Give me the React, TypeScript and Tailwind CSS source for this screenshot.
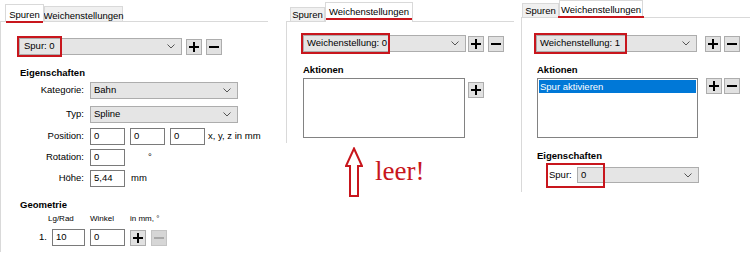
import React from "react";

const RED = "border-[#c8161d]";

const Chevron = () => (
  <svg width="8" height="5" viewBox="0 0 8 5" className="shrink-0">
    <polyline points="0.5,0.5 4,4 7.5,0.5" fill="none" stroke="#555" strokeWidth="1" />
  </svg>
);

const Btn = ({ kind, disabled }: { kind: "plus" | "minus"; disabled?: boolean }) => (
  <div
    className={
      "w-[16px] h-[16px] shrink-0 border flex items-center justify-center " +
      (disabled ? "bg-[#d6d6d6] border-[#c4c4c4]" : "bg-[#e1e1e1] border-[#adadad]")
    }
  >
    <svg width="10" height="10" viewBox="0 0 10 10">
      <rect x="0" y="4" width="10" height="2" fill={disabled ? "#a8a8a8" : "#000"} />
      {kind === "plus" && <rect x="4" y="0" width="2" height="10" fill="#000" />}
    </svg>
  </div>
);

const Combo = ({
  text,
  className,
  pad = "pl-[3px]",
}: {
  text: string;
  className: string;
  pad?: string;
}) => (
  <div
    className={
      "shrink-0 bg-[#e5e5e5] border border-[#adadad] flex items-center justify-between pr-[6px] " +
      pad +
      " " +
      className
    }
  >
    <span>{text}</span>
    <Chevron />
  </div>
);

const Input = ({ value, className }: { value: string; className: string }) => (
  <div className={"shrink-0 h-[17px] bg-white border border-[#7a7a7a] flex items-center pl-[3px] " + className}>
    {value}
  </div>
);

const Tab = ({
  label,
  selected,
  className,
  underline,
}: {
  label: string;
  selected?: boolean;
  className: string;
  underline?: boolean;
}) => (
  <div
    className={
      "border border-b-0 border-[#d9d9d9] flex justify-center " +
      (selected ? "bg-white relative z-10 -mb-px" : "bg-[#f0f0f0]") +
      " " +
      className
    }
  >
    <span className="relative leading-[12px]">
      {label}
      {underline && <span className="absolute left-[-3px] right-[-3px] top-[12px] h-[2px] bg-[#c8161d]" />}
    </span>
  </div>
);

const Label = ({ children }: { children: React.ReactNode }) => (
  <div className="w-[66px] shrink-0 text-right pr-[1px]">{children}</div>
);

export default function App() {
  return (
    <div className="w-[750px] h-[255px] bg-white flex overflow-hidden text-[9.5px] text-black font-['Liberation_Sans',Arial,sans-serif]">
      {/* Panel 1 - Spuren */}
      <div className="w-[268px] shrink-0 flex flex-col">
        <div className="h-[21px] flex items-end pl-[5px]">
          <Tab label="Spuren" selected underline className="w-[39px] h-[18px] pt-[4px]" />
          <Tab label="Weichenstellungen" className="w-[79px] h-[15px] pt-[3px]" />
        </div>
        <div className="h-[231px] border-t border-l border-[#d9d9d9] pl-[18px] pt-[16px]">
          <div className="flex items-center">
            <div className="relative">
              <Combo text="Spur: 0" className="w-[163px] h-[17px]" pad="pl-[4px]" />
              <div className={"absolute left-[-2px] top-[-2px] w-[45px] h-[21px] border-2 " + RED} />
            </div>
            <div className="ml-[4px]">
              <Btn kind="plus" />
            </div>
            <div className="ml-[4px]">
              <Btn kind="minus" />
            </div>
          </div>

          <div className="mt-[12px] ml-px font-bold leading-[12px]">Eigenschaften</div>

          <div className="mt-[3px] flex items-center">
            <Label>Kategorie:</Label>
            <Combo text="Bahn" className="ml-[5px] w-[148px] h-[17px]" />
          </div>
          <div className="mt-[7px] flex items-center">
            <Label>Typ:</Label>
            <Combo text="Spline" className="ml-[5px] w-[148px] h-[17px]" />
          </div>
          <div className="mt-[5px] flex items-center">
            <Label>Position:</Label>
            <Input value="0" className="ml-[5px] w-[35px]" />
            <Input value="0" className="ml-[5px] w-[35px]" />
            <Input value="0" className="ml-[5px] w-[35px]" />
            <span className="ml-[3px] whitespace-nowrap">x, y, z in mm</span>
          </div>
          <div className="mt-[4px] flex items-center">
            <Label>Rotation:</Label>
            <Input value="0" className="ml-[5px] w-[35px]" />
            <span className="ml-[23px]">°</span>
          </div>
          <div className="mt-[4px] flex items-center">
            <Label>Höhe:</Label>
            <Input value="5,44" className="ml-[5px] w-[35px]" />
            <span className="ml-[6px]">mm</span>
          </div>

          <div className="mt-[12px] ml-px font-bold leading-[12px]">Geometrie</div>
          <div className="mt-[3px] flex text-[8px] leading-[10px] pl-[29px]">
            <span className="w-[42px]">Lg/Rad</span>
            <span className="w-[40px]">Winkel</span>
            <span>in mm, °</span>
          </div>
          <div className="mt-[5px] flex items-center">
            <div className="w-[33px] shrink-0 text-right pr-[5px]">1.</div>
            <Input value="10" className="w-[33px] h-[16px]" />
            <Input value="0" className="ml-[5px] w-[35px] h-[16px]" />
            <div className="ml-[5px]">
              <Btn kind="plus" />
            </div>
            <div className="ml-[5px]">
              <Btn kind="minus" disabled />
            </div>
          </div>
        </div>
      </div>

      {/* Panel 2 - Weichenstellung 0 */}
      <div className="ml-[18px] w-[228px] shrink-0 flex flex-col">
        <div className="h-[21px] flex items-end pl-[4px]">
          <Tab label="Spuren" className="w-[35px] h-[14px] pt-px" />
          <Tab label="Weichenstellungen" selected underline className="w-[88px] h-[20px] pt-[3px]" />
        </div>
        <div className="h-[122px] border-t border-l border-[#d9d9d9] pl-[16px] pt-[13px]">
          <div className="flex items-center">
            <div className="relative">
              <Combo text="Weichenstellung: 0" className="w-[163px] h-[17px]" />
              <div className={"absolute left-[-2px] top-[-2px] w-[89px] h-[21px] border-2 " + RED} />
            </div>
            <div className="ml-[2px]">
              <Btn kind="plus" />
            </div>
            <div className="ml-[4px]">
              <Btn kind="minus" />
            </div>
          </div>
          <div className="mt-[12px] font-bold leading-[12px]">Aktionen</div>
          <div className="mt-[2px] flex items-start">
            <div className="w-[162px] h-[60px] border border-[#828282] bg-white shrink-0" />
            <div className="ml-[3px] mt-[4px]">
              <Btn kind="plus" />
            </div>
          </div>
        </div>
        <div className="mt-[4px] pl-[59px] flex items-start">
          <svg width="18" height="50" viewBox="0 0 18 50" className="shrink-0">
            <polygon
              points="9,1.5 17,19 13,19 13,49 5,49 5,19 1,19"
              fill="white"
              stroke="#c8161d"
              strokeWidth="2"
              strokeLinejoin="miter"
            />
          </svg>
          <span className="ml-[12px] mt-[11px] text-[27px] leading-none text-[#c8161d] font-['Liberation_Serif','Times_New_Roman',serif]">
            leer!
          </span>
        </div>
      </div>

      {/* Panel 3 - Weichenstellung 1 */}
      <div className="ml-[7px] w-[229px] shrink-0 flex flex-col">
        <div className="h-[17px] flex items-end pl-px">
          <Tab label="Spuren" className="w-[37px] h-[14px] pt-px" />
          <Tab label="Weichenstellungen" selected underline className="w-[84px] h-[18px] pt-[3px]" />
        </div>
        <div className="h-[175px] border-t border-l border-[#d9d9d9] pl-[14px] pt-[17px]">
          <div className="flex items-center">
            <div className="relative">
              <Combo text="Weichenstellung: 1" className="w-[161px] h-[17px]" />
              <div className={"absolute left-[-2px] top-[-2px] w-[93px] h-[21px] border-2 " + RED} />
            </div>
            <div className="ml-[8px]">
              <Btn kind="plus" />
            </div>
            <div className="ml-[3px]">
              <Btn kind="minus" />
            </div>
          </div>
          <div className="mt-[12px] ml-px font-bold leading-[12px]">Aktionen</div>
          <div className="mt-[2px] flex items-start">
            <div className="ml-px w-[161px] h-[60px] border border-[#828282] bg-white shrink-0 p-px">
              <div className="h-[13px] bg-[#0078d7] text-white leading-[13px] pl-px">Spur aktivieren</div>
            </div>
            <div className="ml-[8px]">
              <Btn kind="plus" />
            </div>
            <div className="ml-[2px]">
              <Btn kind="minus" />
            </div>
          </div>
          <div className="mt-[12px] ml-px font-bold leading-[12px]">Eigenschaften</div>
          <div className="mt-[5px] relative flex items-center">
            <span className="ml-[13px] w-[28px] shrink-0">Spur:</span>
            <Combo text="0" className="w-[122px] h-[16px]" />
            <div className={"absolute left-[10px] top-[-4px] w-[59px] h-[25px] border-2 " + RED} />
          </div>
        </div>
      </div>
    </div>
  );
}
